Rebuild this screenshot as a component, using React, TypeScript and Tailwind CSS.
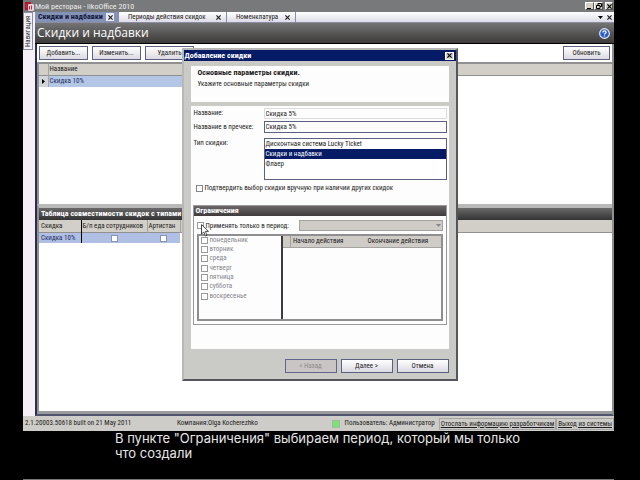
import { ReactNode } from "react";
import clsx from "clsx";

const TABS = [
  { title: "Скидки и надбавки", active: true, width: "w-[84px]" },
  { title: "Периоды действия скидок", active: false, width: "w-[108px]" },
  { title: "Номенклатура", active: false, width: "w-[69px]" },
];

const DISCOUNT_TYPES = ["Дисконтная система Lucky Ticket", "Скидки и надбавки", "Флаер"];

const WEEK_DAYS = [
  "понедельник",
  "вторник",
  "среда",
  "четверг",
  "пятница",
  "суббота",
  "воскресенье",
];

interface ButtonProps {
  children: ReactNode;
  className?: string;
  disabled?: boolean;
}

function Button({ children, className, disabled }: ButtonProps) {
  return (
    <button
      disabled={disabled}
      className={clsx(
        "h-[14px] border text-center leading-[12px] whitespace-nowrap",
        disabled
          ? "border-[#62668a] bg-[#c9c5c4] text-[#8c8c8c]"
          : "border-[#5d6180] bg-linear-to-b from-white to-[#dcdae2]",
        className
      )}
    >
      {children}
    </button>
  );
}

function CrossIcon({ className }: { className?: string }) {
  return (
    <svg viewBox="0 0 6 6" className={clsx("size-[5px]", className)} aria-hidden="true">
      <path d="M0.5 0.5L5.5 5.5M5.5 0.5L0.5 5.5" stroke="currentColor" strokeWidth="1.4" />
    </svg>
  );
}

function CheckBox({ id, muted, disabled }: { id: string; muted?: boolean; disabled?: boolean }) {
  return (
    <input
      id={id}
      type="checkbox"
      disabled={disabled}
      className={clsx(
        "size-[7px] shrink-0 appearance-none border bg-white",
        muted ? "border-[#9a9a9a]" : "border-[#85858c]"
      )}
    />
  );
}

function TitleBar() {
  return (
    <header className="flex h-3 items-center bg-[#77797b] pr-px pl-[2px] text-[#eeeeee]">
      <svg viewBox="0 0 9 9" className="size-[9px]" aria-hidden="true">
        <rect x="0" y="0" width="6" height="8" fill="#b3142c" />
        <rect x="3" y="2" width="6" height="7" rx="1" fill="#e9d3d6" />
        <path d="M1.5 2v4M4.5 4v3.5M6.5 3.5v4" stroke="#cf2b40" strokeWidth="1" />
      </svg>
      <h1 className="flex-1 pl-px text-[8px] leading-[11px]">Мой ресторан - iikoOffice 2010</h1>
      <div className="flex text-black">
        <button aria-label="Свернуть" className="flex h-2 w-[9px] items-end justify-center border border-r-[#555] border-b-[#555] border-white bg-[#d4d0c8]">
          <svg viewBox="0 0 5 5" className="size-[5px]">
            <path d="M0 4.5h4" stroke="currentColor" />
          </svg>
        </button>
        <button aria-label="Восстановить" className="flex h-2 w-[9px] items-center justify-center border border-r-[#555] border-b-[#555] border-white bg-[#d4d0c8]">
          <svg viewBox="0 0 6 6" className="size-[6px]">
            <path d="M2 2V0.5h3.5v3H4M0.5 2.5h3.5v3H0.5z" fill="none" stroke="currentColor" />
          </svg>
        </button>
        <button aria-label="Закрыть" className="ml-[2px] flex h-2 w-[8px] items-center justify-center border border-r-[#555] border-b-[#555] border-white bg-[#d4d0c8]">
          <CrossIcon />
        </button>
      </div>
    </header>
  );
}

function TabStrip() {
  return (
    <nav className="flex h-[11px] items-end border-b border-[#8a8ca3] bg-linear-to-b from-white to-[#dddbe6]">
      {TABS.map((tab) => (
        <div
          key={tab.title}
          className={clsx(
            "flex h-[10px] items-center justify-between border-r border-[#8a8ca3] pr-1",
            tab.width,
            tab.active ? "bg-[#8592b8] pl-[3px]" : "pl-[9px]"
          )}
        >
          <a
            href="#"
            className={clsx("leading-[10px] whitespace-nowrap", tab.active && "text-[8px] font-bold text-[#101838]")}
          >
            {tab.title}
          </a>
          <button
            aria-label={`Закрыть ${tab.title}`}
            className={clsx("flex size-[8px] items-center justify-center", tab.active && "bg-[#eceaf2]")}
          >
            <CrossIcon />
          </button>
        </div>
      ))}
      <div className="ml-auto flex h-[10px] items-center gap-1 pr-[2px]">
        <svg viewBox="0 0 5 3" className="h-[3px] w-[5px]" aria-hidden="true">
          <path d="M0 0h5L2.5 3z" />
        </svg>
        <CrossIcon />
      </div>
    </nav>
  );
}

function DiscountGrid() {
  return (
    <section className="flex-[144] border-l-2 border-[#8f9092] bg-white">
      <table className="w-full border-collapse text-left">
        <thead>
          <tr className="h-3 border-t-2 border-b border-[#8f9092] bg-[#d2cec8]">
            <th className="w-[9px] border-r border-r-[#a5a3a0] p-0" />
            <th className="p-0 pl-px leading-[9px] font-normal">Название</th>
            <th className="w-[160px] p-0" />
          </tr>
        </thead>
        <tbody>
          <tr className="h-3">
            <td className="border-r border-[#a5a3a0] bg-[#d2d4da] p-0">
              <svg viewBox="0 0 3 5" className="mx-auto h-[5px] w-[3px]" aria-hidden="true">
                <path d="M0 0l3 2.5L0 5z" />
              </svg>
            </td>
            <td className="bg-[#b3c6e6] p-0 pl-px leading-[11px] text-[#1c2c5c]">Скидка 10%</td>
            <td className="p-0" />
          </tr>
        </tbody>
      </table>
    </section>
  );
}

function CompatibilityGrid() {
  return (
    <section className="flex-[205] border-t-4 border-b-[3px] border-l-2 border-t-[#b9b9b9] border-b-[#9a9b9d] border-l-[#8f9092] bg-white">
      <h3 className="h-3 bg-linear-to-b from-[#6a6a6a] to-[#333] pl-[2px] text-[8px] leading-[12px] font-bold whitespace-nowrap text-white">
        Таблица совместимости скидок с типами оплат
      </h3>
      <table className="w-full table-fixed border-collapse text-left whitespace-nowrap">
        <thead>
          <tr className="h-3 border-b border-[#8f9092] bg-[#d2cec8]">
            <th className="w-[42px] border-r border-black p-0 pl-[2px] leading-[10px] font-normal">Скидка</th>
            <th className="w-[66px] border-r border-r-[#a5a3a0] p-0 pl-px leading-[10px] font-normal">
              Б/п еда сотрудников
            </th>
            <th className="w-[33px] border-r border-r-[#a5a3a0] p-0 pl-px leading-[10px] font-normal">Артистан</th>
            <th className="p-0" />
          </tr>
        </thead>
        <tbody>
          <tr className="h-[11px] bg-[#b0c0e4]">
            <td className="border-r border-black p-0 pl-[2px] leading-[10px] text-[#1c2c5c]">Скидка 10%</td>
            <td className="p-0">
              <div className="flex justify-center">
                <input type="checkbox" aria-label="Б/п еда сотрудников" className="size-[7px] appearance-none border border-[#8a93b5] bg-white" />
              </div>
            </td>
            <td className="p-0">
              <div className="flex justify-center">
                <input type="checkbox" aria-label="Артистан" className="size-[7px] appearance-none border border-[#8a93b5] bg-white" />
              </div>
            </td>
            <td className="bg-white p-0" />
          </tr>
        </tbody>
      </table>
    </section>
  );
}

function MouseCursor() {
  return (
    <svg viewBox="0 0 8 13" className="absolute top-[5px] left-[4px] h-[13px] w-[8px]" aria-hidden="true">
      <path d="M0.5 0.5V10L2.8 8L4.4 12L6 11.3L4.4 7.4H7.5z" fill="#fff" stroke="#222" strokeWidth="0.8" />
    </svg>
  );
}

function Restrictions() {
  return (
    <fieldset className="mt-[11px] border border-[#9a9a9a]">
      <legend className="float-left h-[10px] w-full bg-linear-to-b from-[#6b6668] to-[#3f3a3c] pl-[2px] text-[8px] leading-[10px] font-bold text-white">
        Ограничения
      </legend>
      <div className="clear-both p-[3px]">
        <div className="relative flex h-[12px] items-center gap-[2px]">
          <CheckBox id="period-only" muted />
          <label htmlFor="period-only" className="w-[91px] pt-px leading-[10px] whitespace-nowrap">
            Применять только в период:
          </label>
          <div className="relative flex-1">
            <select
              aria-label="Период"
              disabled
              className="block h-[11px] w-full appearance-none border border-[#a3a09d] bg-[#cfcbc7] text-[7px] leading-[9px] opacity-100"
            />
            <svg viewBox="0 0 5 3" className="absolute top-[4px] right-[2px] h-[3px] w-[5px] text-[#858585]" aria-hidden="true">
              <path d="M0 0h5L2.5 3z" fill="currentColor" />
            </svg>
          </div>
          <MouseCursor />
        </div>
        <div className="mt-[3px] flex h-[87px] border-2 border-[#8f8f92]">
          <ul className="flex w-[84px] flex-col border-r-2 border-[#3c3c42] pl-[2px]">
            {WEEK_DAYS.map((day, i) => (
              <li key={day} className={clsx("flex items-center gap-[2px] leading-[9px] text-[#85858c]", i % 3 === 2 && "pb-px")}>
                <CheckBox id={`day-${i}`} muted disabled />
                <label htmlFor={`day-${i}`}>{day}</label>
              </li>
            ))}
          </ul>
          <div className="flex-1">
            <table className="w-full table-fixed border-collapse text-left">
              <thead>
                <tr className="h-[11px] border-b border-[#a5a3a0] bg-[#cfcbc7] whitespace-nowrap">
                  <th className="w-[8px] border-r border-r-[#a5a3a0] p-0" />
                  <th className="w-[77px] p-0 pl-[2px] leading-[10px] font-normal">Начало действия</th>
                  <th className="p-0 leading-[10px] font-normal">Окончание действия</th>
                </tr>
              </thead>
            </table>
          </div>
        </div>
      </div>
    </fieldset>
  );
}

function AddDiscountDialog() {
  return (
    <div
      role="dialog"
      aria-labelledby="dialog-title"
      className="absolute top-12 right-0 left-[2px] mx-auto w-[276px] border-2 border-t-[#b8b8b6] border-r-[#55565c] border-b-[#55565c] border-l-[#b8b8b6] bg-[#cacac7]"
    >
      <div className="flex h-[11px] items-center justify-between bg-[#051b66] pr-[2px] pl-px text-white">
        <h2 id="dialog-title" className="text-[8px] leading-[10px] font-bold">
          Добавление скидки
        </h2>
        <button aria-label="Закрыть" className="flex h-2 w-[9px] items-center justify-center border border-white bg-[#d4d0c8] text-black">
          <CrossIcon />
        </button>
      </div>
      <form className="px-[7px] pt-[5px] pb-[6px]">
        <div className="h-9 bg-[#fdfdfd] px-[7px] pt-[2px]">
          <p className="text-[8px] leading-[10px] font-bold">Основные параметры скидки.</p>
          <p className="leading-[12px]">Укажите основные параметры скидки</p>
        </div>

        <div className="mt-1 h-[243px] bg-[#fdfdfd] px-[2px] pt-[2px]">
          <div className="grid grid-cols-[70px_1fr] gap-y-[2px] pl-px">
            <label htmlFor="name" className="leading-[11px]">
              Название:
            </label>
            <input id="name" defaultValue="Скидка 5%" className="h-[11px] min-w-0 border border-[#dcdcdc] px-px leading-[9px]" />
            <label htmlFor="receipt-name" className="leading-[12px] whitespace-nowrap">
              Название в пречеке:
            </label>
            <input id="receipt-name" defaultValue="Скидка 5%" className="h-3 min-w-0 border border-[#5d6180] px-px leading-[9px]" />
            <label htmlFor="type" className="mt-[3px] leading-[11px]">
              Тип скидки:
            </label>
            <select
              id="type"
              size={4}
              defaultValue="Скидки и надбавки"
              className="mt-[3px] h-[42px] w-full appearance-none overflow-hidden border border-[#5d6180] bg-white"
            >
              {DISCOUNT_TYPES.map((type) => (
                <option
                  key={type}
                  className="min-h-0 px-px py-px checked:bg-linear-to-b checked:from-[#051b66] checked:to-[#051b66] checked:[-webkit-text-fill-color:#fff]"
                >
                  {type}
                </option>
              ))}
            </select>
          </div>
          <div className="mt-[3px] flex items-center gap-[2px] pl-[3px]">
            <CheckBox id="confirm" />
            <label htmlFor="confirm" className="leading-[11px] whitespace-nowrap">
              Подтвердить выбор скидки вручную при наличии других скидок
            </label>
          </div>
          <Restrictions />
        </div>

        <div className="mt-[10px] flex justify-end gap-1">
          <Button disabled className="w-[52px]">
            &lt; Назад
          </Button>
          <Button className="w-[52px]">Далее &gt;</Button>
          <Button className="w-[52px]">Отмена</Button>
        </div>
      </form>
    </div>
  );
}

function StatusBar() {
  return (
    <footer className="flex h-[15px] items-center bg-[#cdccc8] pl-[2px] whitespace-nowrap">
      <span className="w-[152px]">2.1.20003.50618 built on 21 May 2011</span>
      <span>Компания:Olga Kocherezhko</span>
      <span className="ml-auto size-2 border border-[#9bbf94] bg-[#7fe07a]" />
      <span className="pr-1 pl-[5px]">Пользователь: Администратор</span>
      <a href="#" className="border border-[#a5a5a2] px-px leading-[10px] underline">
        Отослать информацию разработчикам
      </a>
      <a href="#" className="border border-[#a5a5a2] px-px leading-[10px] underline">
        Выход из системы
      </a>
    </footer>
  );
}

export default function App() {
  return (
    <div className="flex h-screen flex-col bg-black pr-[26px] pl-[23px] font-['Roboto_Condensed',Roboto,sans-serif] text-[7px] text-[#1c1c20]">
      <div className="relative flex flex-1 flex-col bg-[#f6eff6]">
        <TitleBar />
        <div className="flex flex-1">
          <aside className="w-3">
            <button className="h-[38px] w-[10px] rotate-180 border border-[#8a8ca3] bg-[#f4f2f8] leading-[8px] [writing-mode:vertical-rl]">
              Навигация
            </button>
          </aside>
          <main className="flex flex-1 flex-col">
            <TabStrip />
            <div className="flex h-[21px] items-center justify-between border-b border-black bg-linear-to-b from-[#747475] to-[#3c3b39] pr-1 pl-[2px]">
              <h2 className="font-['Open_Sans',sans-serif] text-[12px] leading-[20px] text-white">Скидки и надбавки</h2>
              <svg viewBox="0 0 12 12" className="size-[11px]" role="img" aria-label="Справка">
                <circle cx="6" cy="6" r="5.3" fill="#2f5fc4" stroke="#e8eefb" strokeWidth="1.2" />
                <path d="M4.2 4.8C4.2 2.6 7.8 2.7 7.8 4.7C7.8 5.8 6 5.8 6 7.2M6 8.2v1.2" fill="none" stroke="#fff" strokeWidth="1.2" />
              </svg>
            </div>
            <div className="flex flex-1 flex-col border-x-2 border-b-2 border-r-[#8f9092] border-b-[#50546c] border-l-[#2c2d4c]">
              <div className="flex h-[18px] items-center gap-1 bg-white px-[2px]">
                <Button className="w-[49px]">Добавить...</Button>
                <Button className="w-[49px]">Изменить...</Button>
                <Button className="w-[49px]">Удалить</Button>
                <Button className="ml-auto w-[47px]">Обновить</Button>
              </div>
              <DiscountGrid />
              <CompatibilityGrid />
            </div>
          </main>
        </div>
        <StatusBar />
        <AddDiscountDialog />
      </div>
      <p className="h-[49px] border-b border-[#777] pl-[92px] font-['Inter',sans-serif] text-[13px] leading-[15px] text-[#e6e6e6]">
        В пункте "Ограничения" выбираем период, который мы только
        <br />
        что создали
      </p>
    </div>
  );
}
